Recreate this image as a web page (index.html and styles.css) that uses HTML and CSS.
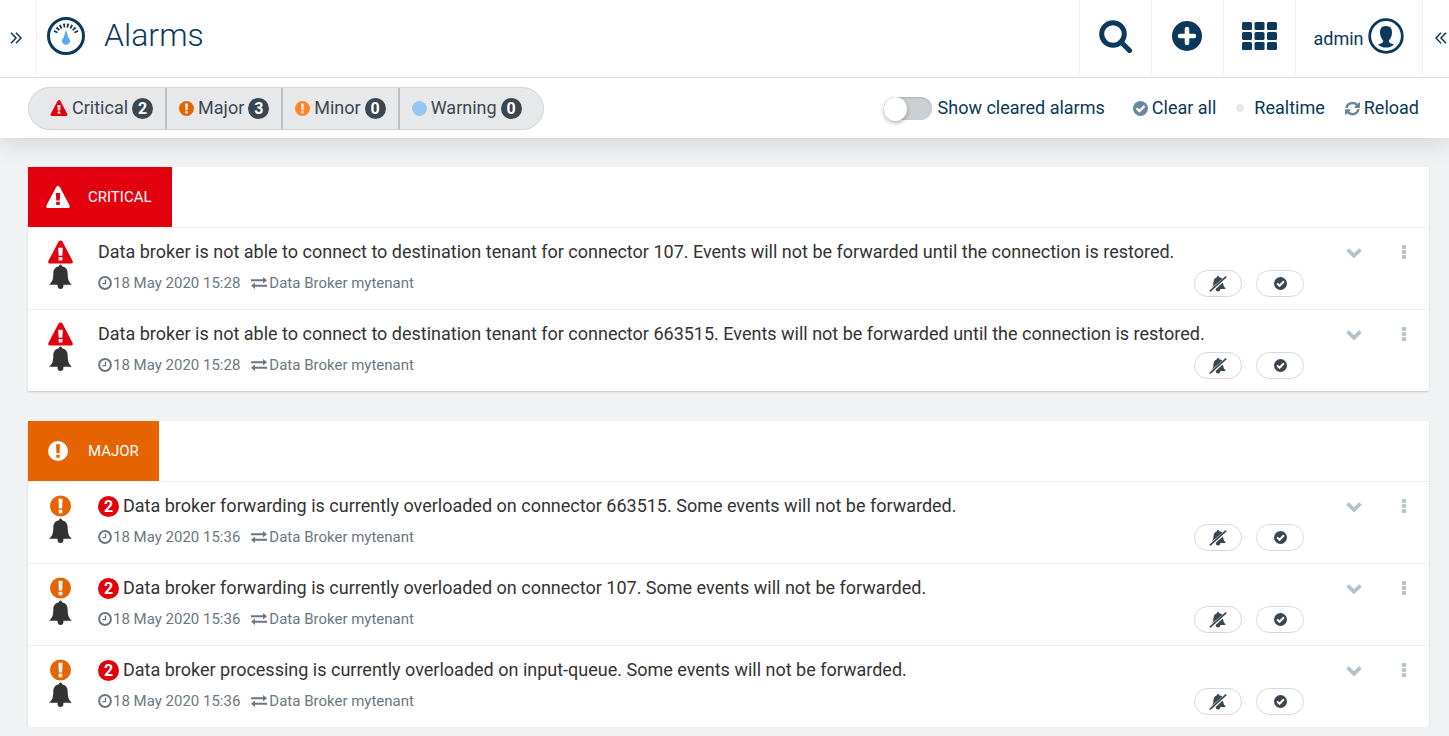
FILE: index.html
```html
<!DOCTYPE html>
<html lang="en">
<head>
<meta charset="utf-8">
<title>Alarms</title>
<link rel="stylesheet" href="styles.css">
</head>
<body>
<svg class="sprite" aria-hidden="true">
  <symbol id="triangle" viewBox="0 0 26 24"><path fill-rule="evenodd" d="M13 0Q14.300 0 15 1.200L25.600 21.400Q26.400 24 24 24H2Q-.400 24 .400 21.400L11 1.200Q11.700 0 13 0ZM10.600 7.500 11.100 15.800H14.900L15.400 7.500ZM11 17.200V20.800H15V17.200Z"/></symbol>
  <symbol id="exclaim" viewBox="0 0 22 22"><path fill-rule="evenodd" d="M11 0A11 11 0 1 1 11 22A11 11 0 1 1 11 0ZM8.800 3.500 9.300 13.500H12.700L13.200 3.500ZM9.100 15V18.500H12.900V15Z"/></symbol>
  <symbol id="bell" viewBox="0 0 24 26"><path d="M12 0Q13.600 0 13.600 1.900C18 2.800 19.500 6 19.500 9.500C19.500 15 20.500 18 24 21H15A3.200 3.200 0 0 1 15 22.500A3 3 0 0 1 9 22.500A3.200 3.200 0 0 1 9 21H0C3.500 18 4.500 15 4.500 9.500C4.500 6 6 2.800 10.400 1.900Q10.400 0 12 0Z"/></symbol>
  <symbol id="bell-off" viewBox="0 0 18 16"><path d="M9 0Q10.200 0 10.200 1.200Q12.200 1.500 13.400 2.700L3 11.500Q4.500 10 4.500 6Q4.800 2.300 7.900 1.200Q7.900 0 9 0ZM13.800 6.600Q14.200 10.500 16.800 13H11.500Q11 15.600 9 15.600Q7 15.600 6.600 13Z"/><path d="M.8 15.300 17.200 .7" fill="none" stroke="currentColor" stroke-width="1.700"/></symbol>
  <symbol id="check" viewBox="0 0 16 16"><circle cx="8" cy="8" r="8"/><path d="m3.800 7.800 3 3 5.500-5.500" fill="none" stroke="#fff" stroke-width="2.400"/></symbol>
  <symbol id="clock" viewBox="0 0 14 14"><g fill="none" stroke="currentColor"><circle cx="7" cy="7" r="5.900" stroke-width="2"/><path d="M7.500 3.500V7.600H4.500" stroke-width="1.300"/></g></symbol>
  <symbol id="exchange" viewBox="0 0 16 12"><path d="M0 2.300H12V0L16 3.300 12 6.500V4.300H0ZM16 7.800H4V5.500L0 8.700 4 12V9.800H16Z"/></symbol>
  <symbol id="chevron" viewBox="0 0 16 10"><path d="m1.500 1.500 6.500 6.300 6.500-6.300" fill="none" stroke="currentColor" stroke-width="3.800"/></symbol>
  <symbol id="dots" viewBox="0 0 4 14"><rect width="4" height="4" rx="1"/><rect y="5" width="4" height="4" rx="1"/><rect y="10" width="4" height="4" rx="1"/></symbol>
  <symbol id="angles" viewBox="0 0 12 12"><path d="m1 .8 5 5.200-5 5.200M6 .8l5 5.200-5 5.200" fill="none" stroke="currentColor" stroke-width="1.500"/></symbol>
  <symbol id="refresh" viewBox="0 64 1536 1536"><path d="M1511 928q0 5-1 7-64 268-268 434.500t-478 166.500q-146 0-282.500-55t-243.500-157l-129 129q-19 19-45 19t-45-19-19-45v-448q0-26 19-45t45-19h448q26 0 45 19t19 45-19 45l-137 137q71 66 161 102t187 36q134 0 250-65t186-179q11-17 53-117 8-23 30-23h192q13 0 22.500 9.500t9.500 22.500zM1536 256v448q0 26-19 45t-45 19h-448q-26 0-45-19t-19-45 19-45l138-138q-148-137-349-137-134 0-250 65t-186 179q-11 17-53 117-8 23-30 23h-199q-13 0-22.500-9.500t-9.500-22.500v-7q65-268 270-434.500t480-166.500q146 0 284 55.500t245 156.500l130-129q19-19 45-19t45 19 19 45z"/></symbol>
</svg>

<header class="topbar">
  <button class="drawer-toggle drawer-left" aria-label="Open navigator"><svg class="i-angles"><use href="#angles"/></svg></button>
  <svg class="logo" viewBox="0 0 38 38" aria-hidden="true">
    <circle cx="19" cy="20" r="11.500" fill="none" stroke="#0b385b" stroke-width="4" pathLength="360" stroke-dasharray="9 9" stroke-dashoffset="-4.500"/>
    <path d="M5 17H33V34H5Z" fill="#fff"/>
    <circle cx="19" cy="19" r="17.500" fill="none" stroke="#0b385b" stroke-width="3"/>
    <path d="M19 12.500 21.300 20.500A4 4 0 1 1 16.700 20.500Z" fill="#5aaaea"/>
  </svg>
  <h1 class="title">Alarms</h1>
  <nav class="actions">
    <button class="action" aria-label="Search"><svg class="i-search" viewBox="0 0 33 33"><circle cx="14" cy="14" r="11.300" fill="none" stroke="currentColor" stroke-width="5"/><path d="m22 22 8.500 8.500" fill="none" stroke="currentColor" stroke-width="5" stroke-linecap="round"/></svg></button>
    <button class="action" aria-label="Add"><svg class="i-plus" viewBox="0 0 30 30"><circle cx="15" cy="15" r="15"/><path d="M15 8V22M8 15H22" stroke="#fff" stroke-width="4.500" stroke-linecap="round"/></svg></button>
    <button class="action" aria-label="Applications"><svg class="i-grid" viewBox="0 0 35 28"><rect width="10" height="8" rx="1.500"/><rect x="12.500" width="10" height="8" rx="1.500"/><rect x="25" width="10" height="8" rx="1.500"/><rect y="10" width="10" height="8" rx="1.500"/><rect x="12.500" y="10" width="10" height="8" rx="1.500"/><rect x="25" y="10" width="10" height="8" rx="1.500"/><rect y="20" width="10" height="8" rx="1.500"/><rect x="12.500" y="20" width="10" height="8" rx="1.500"/><rect x="25" y="20" width="10" height="8" rx="1.500"/></svg></button>
    <button class="action user"><span class="user-name">admin</span><svg class="i-user" viewBox="0 0 36 36" aria-hidden="true"><circle cx="18" cy="18" r="16.300" fill="none" stroke="currentColor" stroke-width="2.800"/><path d="M18 8C22.500 8 24 10.800 24 14.500C24 18 22.500 20.500 20.800 22.500Q20.800 24.600 22.500 25.200L26 26.500Q23 29.600 18 29.600T10 26.500L13.500 25.200Q15.200 24.600 15.200 22.500C13.500 20.500 12 18 12 14.500C12 10.800 13.500 8 18 8Z"/></svg></button>
    <button class="drawer-toggle drawer-right" aria-label="Open drawer"><svg class="i-angles flip"><use href="#angles"/></svg></button>
  </nav>
</header>

<section class="toolbar">
  <div class="filters">
    <button class="filter"><svg class="i-small-tri red"><use href="#triangle"/></svg>Critical<span class="badge">2</span></button>
    <button class="filter"><svg class="i-small orange"><use href="#exclaim"/></svg>Major<span class="badge">3</span></button>
    <button class="filter"><svg class="i-small light-orange"><use href="#exclaim"/></svg>Minor<span class="badge">0</span></button>
    <button class="filter"><span class="blue-dot"></span>Warning<span class="badge">0</span></button>
  </div>
  <div class="tools">
    <label class="switch"><input type="checkbox" class="switch-box">Show cleared alarms</label>
    <button class="tool clear"><svg class="i-small"><use href="#check"/></svg>Clear all</button>
    <button class="tool realtime"><span class="live-dot"></span>Realtime</button>
    <button class="tool"><svg class="i-small"><use href="#refresh"/></svg>Reload</button>
  </div>
</section>

<main class="content">
  <section class="card">
    <h2 class="severity severity-critical"><svg class="i-tri-head"><use href="#triangle"/></svg>CRITICAL</h2>
    <article class="alarm">
      <div class="status red"><svg class="i-tri"><use href="#triangle"/></svg><svg class="i-bell"><use href="#bell"/></svg></div>
      <div class="info">
        <p class="message">Data broker is not able to connect to destination tenant for connector 107. Events will not be forwarded until the connection is restored.</p>
        <div class="details">
          <p class="meta"><svg class="i-clock"><use href="#clock"/></svg><time>18 May 2020 15:28</time><svg class="i-exchange"><use href="#exchange"/></svg><span>Data Broker mytenant</span></p>
          <div class="row-actions"><button class="pill" aria-label="Acknowledge"><svg class="i-off"><use href="#bell-off"/></svg></button><button class="pill" aria-label="Clear"><svg class="i-check"><use href="#check"/></svg></button></div>
        </div>
      </div>
      <button class="plain" aria-label="Expand"><svg class="i-chevron"><use href="#chevron"/></svg></button>
      <button class="plain more" aria-label="More"><svg class="i-dots"><use href="#dots"/></svg></button>
    </article>
    <article class="alarm">
      <div class="status red"><svg class="i-tri"><use href="#triangle"/></svg><svg class="i-bell"><use href="#bell"/></svg></div>
      <div class="info">
        <p class="message">Data broker is not able to connect to destination tenant for connector 663515. Events will not be forwarded until the connection is restored.</p>
        <div class="details">
          <p class="meta"><svg class="i-clock"><use href="#clock"/></svg><time>18 May 2020 15:28</time><svg class="i-exchange"><use href="#exchange"/></svg><span>Data Broker mytenant</span></p>
          <div class="row-actions"><button class="pill" aria-label="Acknowledge"><svg class="i-off"><use href="#bell-off"/></svg></button><button class="pill" aria-label="Clear"><svg class="i-check"><use href="#check"/></svg></button></div>
        </div>
      </div>
      <button class="plain" aria-label="Expand"><svg class="i-chevron"><use href="#chevron"/></svg></button>
      <button class="plain more" aria-label="More"><svg class="i-dots"><use href="#dots"/></svg></button>
    </article>
  </section>

  <section class="card">
    <h2 class="severity severity-major"><svg class="i-exc-head"><use href="#exclaim"/></svg>MAJOR</h2>
    <article class="alarm">
      <div class="status orange"><svg class="i-exc"><use href="#exclaim"/></svg><svg class="i-bell"><use href="#bell"/></svg></div>
      <div class="info">
        <p class="message"><span class="badge count">2</span>Data broker forwarding is currently overloaded on connector 663515. Some events will not be forwarded.</p>
        <div class="details">
          <p class="meta"><svg class="i-clock"><use href="#clock"/></svg><time>18 May 2020 15:36</time><svg class="i-exchange"><use href="#exchange"/></svg><span>Data Broker mytenant</span></p>
          <div class="row-actions"><button class="pill" aria-label="Acknowledge"><svg class="i-off"><use href="#bell-off"/></svg></button><button class="pill" aria-label="Clear"><svg class="i-check"><use href="#check"/></svg></button></div>
        </div>
      </div>
      <button class="plain" aria-label="Expand"><svg class="i-chevron"><use href="#chevron"/></svg></button>
      <button class="plain more" aria-label="More"><svg class="i-dots"><use href="#dots"/></svg></button>
    </article>
    <article class="alarm">
      <div class="status orange"><svg class="i-exc"><use href="#exclaim"/></svg><svg class="i-bell"><use href="#bell"/></svg></div>
      <div class="info">
        <p class="message"><span class="badge count">2</span>Data broker forwarding is currently overloaded on connector 107. Some events will not be forwarded.</p>
        <div class="details">
          <p class="meta"><svg class="i-clock"><use href="#clock"/></svg><time>18 May 2020 15:36</time><svg class="i-exchange"><use href="#exchange"/></svg><span>Data Broker mytenant</span></p>
          <div class="row-actions"><button class="pill" aria-label="Acknowledge"><svg class="i-off"><use href="#bell-off"/></svg></button><button class="pill" aria-label="Clear"><svg class="i-check"><use href="#check"/></svg></button></div>
        </div>
      </div>
      <button class="plain" aria-label="Expand"><svg class="i-chevron"><use href="#chevron"/></svg></button>
      <button class="plain more" aria-label="More"><svg class="i-dots"><use href="#dots"/></svg></button>
    </article>
    <article class="alarm">
      <div class="status orange"><svg class="i-exc"><use href="#exclaim"/></svg><svg class="i-bell"><use href="#bell"/></svg></div>
      <div class="info">
        <p class="message"><span class="badge count">2</span>Data broker processing is currently overloaded on input-queue. Some events will not be forwarded.</p>
        <div class="details">
          <p class="meta"><svg class="i-clock"><use href="#clock"/></svg><time>18 May 2020 15:36</time><svg class="i-exchange"><use href="#exchange"/></svg><span>Data Broker mytenant</span></p>
          <div class="row-actions"><button class="pill" aria-label="Acknowledge"><svg class="i-off"><use href="#bell-off"/></svg></button><button class="pill" aria-label="Clear"><svg class="i-check"><use href="#check"/></svg></button></div>
        </div>
      </div>
      <button class="plain" aria-label="Expand"><svg class="i-chevron"><use href="#chevron"/></svg></button>
      <button class="plain more" aria-label="More"><svg class="i-dots"><use href="#dots"/></svg></button>
    </article>
  </section>
</main>
</body>
</html>
```
FILE: styles.css
```css
* { box-sizing: border-box; }
body {
  margin: 0;
  background: #f1f2f4;
  color: #333;
  font: 18px/24px Roboto, sans-serif;
}
h1, h2, p { margin: 0; font-weight: 400; }
button {
  margin: 0;
  padding: 0;
  border: 0;
  background: none;
  color: inherit;
  font: inherit;
  cursor: pointer;
}
svg { display: block; flex: none; fill: currentColor; }
.sprite { position: absolute; width: 0; height: 0; }

.topbar {
  display: flex;
  align-items: center;
  height: 78px;
  background: #fff;
  border-bottom: 1px solid #dcdddf;
  color: #0b385b;
}
.drawer-toggle { display: flex; align-items: center; align-self: stretch; padding-bottom: 2px; }
.drawer-left { width: 37px; padding-left: 10px; border-right: 1px solid #f1f2f4; }
.drawer-right { width: 27px; padding-left: 12px; border-left: 1px solid #f1f2f4; }
.i-angles { width: 12px; height: 12px; }
.flip { transform: scaleX(-1); }
.logo { width: 38px; height: 38px; margin: 0 19px 5px 10px; }
.title { padding-bottom: 7px; font-size: 32px; line-height: 40px; font-weight: 300; }
.actions { display: flex; align-self: stretch; margin-left: auto; }
.action {
  display: flex;
  align-items: center;
  justify-content: center;
  width: 72px;
  padding: 0 1px 5px 0;
  border-left: 1px solid #f1f2f4;
}
.user { width: 127px; gap: 4px; }
.user-name { padding-top: 6px; }
.i-search { width: 33px; height: 33px; }
.i-plus { width: 30px; height: 30px; }
.i-grid { width: 35px; height: 28px; }
.i-user { width: 36px; height: 36px; }

.toolbar {
  display: flex;
  align-items: center;
  justify-content: space-between;
  height: 60px;
  padding: 0 30px 0 28px;
  background: #fff;
  box-shadow: 0 2px 28px rgba(0, 0, 0, .16);
  clip-path: inset(0 0 -40px 0);
}
.filters {
  display: flex;
  overflow: hidden;
  height: 43px;
  border: 1px solid #d2d4d6;
  border-radius: 22px;
  background: #e7e8ea;
  color: #3a4750;
}
.filter { display: flex; align-items: center; gap: 4px; padding: 0 12px; }
.filter:first-child { padding-left: 21px; }
.filter:last-child { padding-right: 21px; }
.filter + .filter { border-left: 2px solid #bcbfc3; }
.badge {
  display: inline-block;
  width: 21px;
  height: 21px;
  border-radius: 50%;
  background: #3a4750;
  color: #fff;
  font-size: 16px;
  line-height: 21px;
  font-weight: 700;
  text-align: center;
}
.red { color: #e2000f; }
.orange { color: #e66400; }
.light-orange { color: #ff8327; }
.i-small { width: 15px; height: 15px; }
.i-small-tri { width: 18px; height: 16px; }
.blue-dot { width: 15px; height: 15px; border-radius: 50%; background: #95c8f1; }

.tools { display: flex; align-items: center; color: #0b385b; }
.switch { display: flex; align-items: center; gap: 6px; margin-right: 28px; }
.switch-box {
  appearance: none;
  width: 48px;
  height: 23px;
  margin: 0;
  border-radius: 12px;
  background: #cbd0d4;
  box-shadow: inset 0 1px 2px rgba(0, 0, 0, .15);
}
.switch-box::before {
  content: "";
  display: block;
  width: 23px;
  height: 24px;
  border-radius: 50%;
  background: #fff;
  box-shadow: 0 2px 4px rgba(0, 0, 0, .3);
}
.tool { display: flex; align-items: center; gap: 4px; }
.tool svg { color: #6b879d; }
.clear { margin-right: 20px; }
.realtime { gap: 10px; margin-right: 20px; }
.live-dot { width: 8px; height: 8px; border-radius: 50%; background: #e5e9ec; }

.content { padding: 29px 20px 0 28px; }
.card {
  margin-bottom: 30px;
  border-radius: 2px;
  background: #fff;
  box-shadow: 0 1px 2px rgba(0, 0, 0, .18);
}
.card:last-child { margin-bottom: 0; }
.severity {
  display: inline-flex;
  align-items: center;
  height: 60px;
  padding: 0 20px 0 18px;
  color: #fff;
  font-size: 15px;
  vertical-align: top;
}
.severity-critical { background: #e2000f; }
.severity-major { padding-left: 20px; background: #e66400; }
.i-tri-head { width: 24px; height: 22px; margin-right: 18px; }
.i-exc-head { width: 20px; height: 20px; margin-right: 20px; }
.alarm {
  display: grid;
  grid-template-columns: 70px 1fr 50px 50px;
  align-items: start;
  min-height: 82px;
  border-top: 1px solid #edeff0;
}
.status { display: flex; flex-direction: column; align-items: center; width: 65px; padding-top: 12px; }
.i-tri { width: 25px; height: 24px; }
.i-exc { width: 21px; height: 22px; margin: 1px 0; }
.i-bell { width: 23px; height: 26px; color: #333; }
.info { padding: 12px 25px 0 0; }
.count { margin-right: 4px; background: #e2000f; }
.details { display: flex; justify-content: space-between; padding-top: 6px; }
.meta { display: flex; align-items: center; height: 26px; color: #6b7780; font-size: 15px; }
.i-clock { width: 14px; height: 14px; margin-right: 1px; }
.i-exchange { width: 16px; height: 12px; margin: 0 2px 0 11px; }
.row-actions { display: flex; gap: 14px; }
.pill {
  display: flex;
  align-items: center;
  justify-content: center;
  width: 48px;
  height: 27px;
  border: 1px solid #d5d9dc;
  border-radius: 14px;
  color: #3a4750;
}
.i-off { width: 18px; height: 16px; }
.i-check { width: 13px; height: 13px; }
.plain { display: flex; align-items: center; justify-content: center; height: 50px; color: #b4c2cc; }
.more { height: 47px; }
.i-chevron { width: 16px; height: 10px; }
.i-dots { width: 4px; height: 14px; }
```
